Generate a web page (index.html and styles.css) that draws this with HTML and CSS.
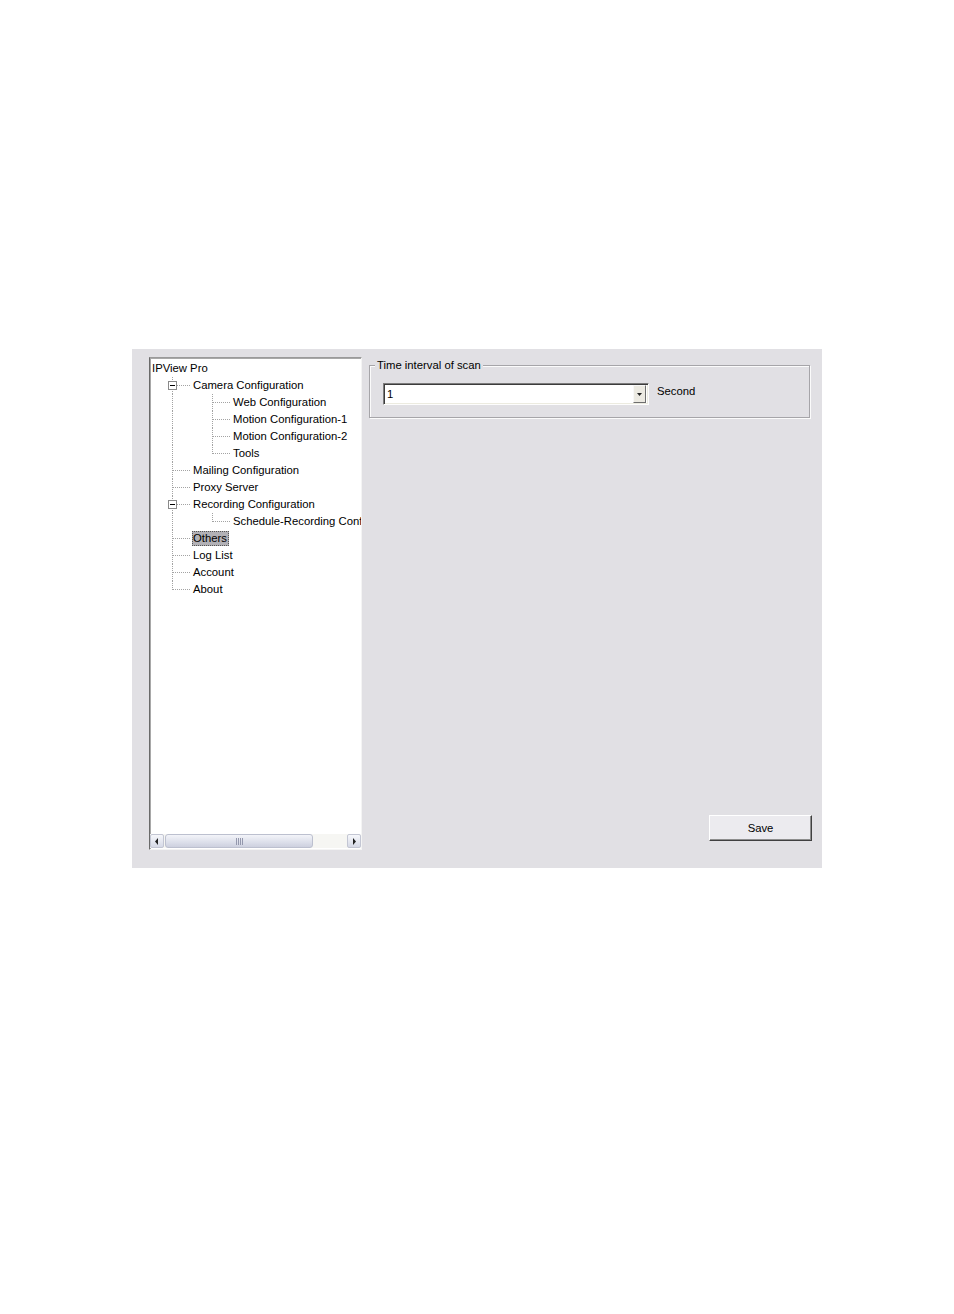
FILE: index.html
```html
<!DOCTYPE html>
<html>
<head>
<meta charset="utf-8">
<title>IPView Pro - Others</title>
<link rel="stylesheet" href="styles.css">
</head>
<body>
<div class="panel">
  <div class="tree">
    <div class="tree-list">
      <div class="row root"><span class="label">IPView Pro</span></div>
      <div class="row"><span class="cell tee"><span class="exp"></span></span><span class="label">Camera Configuration</span></div>
      <div class="row"><span class="cell line"></span><span class="cell tee"></span><span class="label">Web Configuration</span></div>
      <div class="row"><span class="cell line"></span><span class="cell tee"></span><span class="label">Motion Configuration-1</span></div>
      <div class="row"><span class="cell line"></span><span class="cell tee"></span><span class="label">Motion Configuration-2</span></div>
      <div class="row"><span class="cell line"></span><span class="cell elbow"></span><span class="label">Tools</span></div>
      <div class="row"><span class="cell tee"></span><span class="label">Mailing Configuration</span></div>
      <div class="row"><span class="cell tee"></span><span class="label">Proxy Server</span></div>
      <div class="row"><span class="cell tee"><span class="exp"></span></span><span class="label">Recording Configuration</span></div>
      <div class="row"><span class="cell line"></span><span class="cell elbow"></span><span class="label">Schedule-Recording Configuration</span></div>
      <div class="row"><span class="cell tee"></span><span class="label selected">Others</span></div>
      <div class="row"><span class="cell tee"></span><span class="label">Log List</span></div>
      <div class="row"><span class="cell tee"></span><span class="label">Account</span></div>
      <div class="row"><span class="cell elbow"></span><span class="label">About</span></div>
    </div>
    <div class="hscroll">
      <span class="sbtn"><svg width="6" height="7" viewBox="0 0 6 7"><path d="M4 0 L1 3.5 L4 7 Z" fill="#222"/></svg></span>
      <span class="thumb"><span class="grip"></span><span class="grip"></span><span class="grip"></span><span class="grip"></span></span>
      <span class="track"></span>
      <span class="sbtn"><svg width="6" height="7" viewBox="0 0 6 7"><path d="M2 0 L5 3.5 L2 7 Z" fill="#222"/></svg></span>
    </div>
  </div>
  <div class="content">
    <fieldset class="group">
      <legend>Time interval of scan</legend>
      <div class="field-row">
        <div class="combo">
          <span class="combo-value">1</span>
          <span class="combo-btn"><svg width="5" height="3" viewBox="0 0 5 3"><path d="M0 0 H5 L2.5 3 Z" fill="#222"/></svg></span>
        </div>
        <span class="unit">Second</span>
      </div>
    </fieldset>
    <button class="save" type="button">Save</button>
  </div>
</div>
</body>
</html>
```

FILE: styles.css
```css
html, body {
  margin: 0;
  padding: 0;
  background: #ffffff;
}

body {
  font-family: "Liberation Sans", Arial, sans-serif;
  font-size: 11.3px;
  color: #000;
}

.panel {
  margin: 349px 0 0 132px;
  width: 690px;
  height: 519px;
  box-sizing: border-box;
  padding: 8px 0 0 17px;
  background: #e1e0e4;
  display: flex;
  align-items: flex-start;
  gap: 7px;
}

/* ---------- tree view ---------- */
.tree {
  width: 213px;
  height: 493px;
  box-sizing: border-box;
  border: 1px solid;
  border-color: #9a9a9a #f4f4f4 #f4f4f4 #6a6a6a;
  box-shadow: inset 1px 1px 0 #a8a8a8;
  background: #fff;
  display: flex;
  flex-direction: column;
}

.tree-list {
  flex: 1;
  padding: 2px 0 0 1px;
  overflow: hidden;
}

.row {
  height: 17px;
  display: flex;
  align-items: center;
  white-space: nowrap;
}

.root .label {
  padding-left: 1px;
}

.cell {
  position: relative;
  flex: none;
  width: 40px;
  height: 17px;
}

.cell.line::before,
.cell.tee::before,
.cell.elbow::before {
  content: "";
  position: absolute;
  left: 21px;
  top: 0;
  bottom: 0;
  border-left: 1px dotted #a3a3a3;
}

.cell.elbow::before {
  bottom: 8px;
}

.cell.tee::after,
.cell.elbow::after {
  content: "";
  position: absolute;
  left: 22px;
  top: 8px;
  width: 17px;
  border-top: 1px dotted #a3a3a3;
}

.exp {
  position: absolute;
  left: 17px;
  top: 4px;
  width: 9px;
  height: 9px;
  box-sizing: border-box;
  border: 1px solid #8a8a8a;
  background: #fff;
  z-index: 1;
}

.exp::after {
  content: "";
  position: absolute;
  left: 1px;
  top: 3px;
  width: 5px;
  height: 1px;
  background: #000;
}

.label {
  display: inline-block;
  height: 15px;
  line-height: 15px;
  padding: 0 2px;
  box-sizing: border-box;
}

.label.selected {
  background: #b2b1b6;
  outline: 1px dotted #555;
  outline-offset: -1px;
  padding: 0 2px 0 1px;
  margin-left: 1px;
}

/* ---------- horizontal scrollbar ---------- */
.hscroll {
  height: 14px;
  display: flex;
  background: #f6f6f3;
  margin-bottom: 1px;
}

.sbtn {
  flex: none;
  width: 14px;
  height: 14px;
  box-sizing: border-box;
  border: 1px solid #c3c6d3;
  border-radius: 2px;
  background: linear-gradient(#f6f7fb, #d6d9e6);
  display: flex;
  align-items: center;
  justify-content: center;
}

.thumb {
  flex: none;
  width: 148px;
  height: 14px;
  margin-left: 1px;
  box-sizing: border-box;
  border: 1px solid #bcc0cf;
  border-radius: 3px;
  background: linear-gradient(#f3f4f9, #dcdfea 60%, #cdd0de);
  display: flex;
  align-items: center;
  justify-content: center;
  gap: 1px;
}

.grip {
  width: 1px;
  height: 7px;
  background: #9498ad;
}

.track {
  flex: 1;
}

/* ---------- right content ---------- */
.content {
  width: 443px;
  height: 484px;
  display: flex;
  flex-direction: column;
  justify-content: space-between;
  align-items: flex-start;
}

.group {
  width: 441px;
  margin: 1px 0 0 0;
  box-sizing: border-box;
  border: 1px solid #a6a5a9;
  box-shadow: inset 1px 1px 0 #fbfbfb, 1px 1px 0 #fbfbfb;
  padding: 11px 12px 12px 13px;
}

.group legend {
  margin-left: -8px;
  padding: 0 2px;
  line-height: 14px;
  background: #e1e0e4;
}

.field-row {
  display: flex;
  align-items: center;
  gap: 8px;
}

.combo {
  flex: none;
  width: 266px;
  height: 22px;
  box-sizing: border-box;
  border: 1px solid;
  border-color: #7c7c7c #fdfdfd #fdfdfd #7c7c7c;
  box-shadow: inset 1px 1px 0 #3c3c3c, inset -1px -1px 0 #ecebe0;
  background: #fff;
  display: flex;
  align-items: center;
  justify-content: space-between;
  padding: 0 2px 0 3px;
}

.combo-value {
  line-height: 14px;
}

.combo-btn {
  width: 13px;
  height: 18px;
  box-sizing: border-box;
  border: 1px solid;
  border-color: #f8f8f8 #6e6e6e #6e6e6e #f8f8f8;
  background: #eceae2;
  display: flex;
  align-items: center;
  justify-content: center;
}

.unit {
  line-height: 14px;
  margin-top: -6px;
}

.save {
  align-self: flex-end;
  width: 103px;
  height: 26px;
  box-sizing: border-box;
  margin: 0;
  border: 1px solid;
  border-color: #ffffff #404040 #404040 #ffffff;
  box-shadow: inset -1px -1px 0 #8e8e8e;
  background: #ecebef;
  font-family: "Liberation Sans", Arial, sans-serif;
  font-size: 11.3px;
  color: #000;
  padding: 0;
}
```
